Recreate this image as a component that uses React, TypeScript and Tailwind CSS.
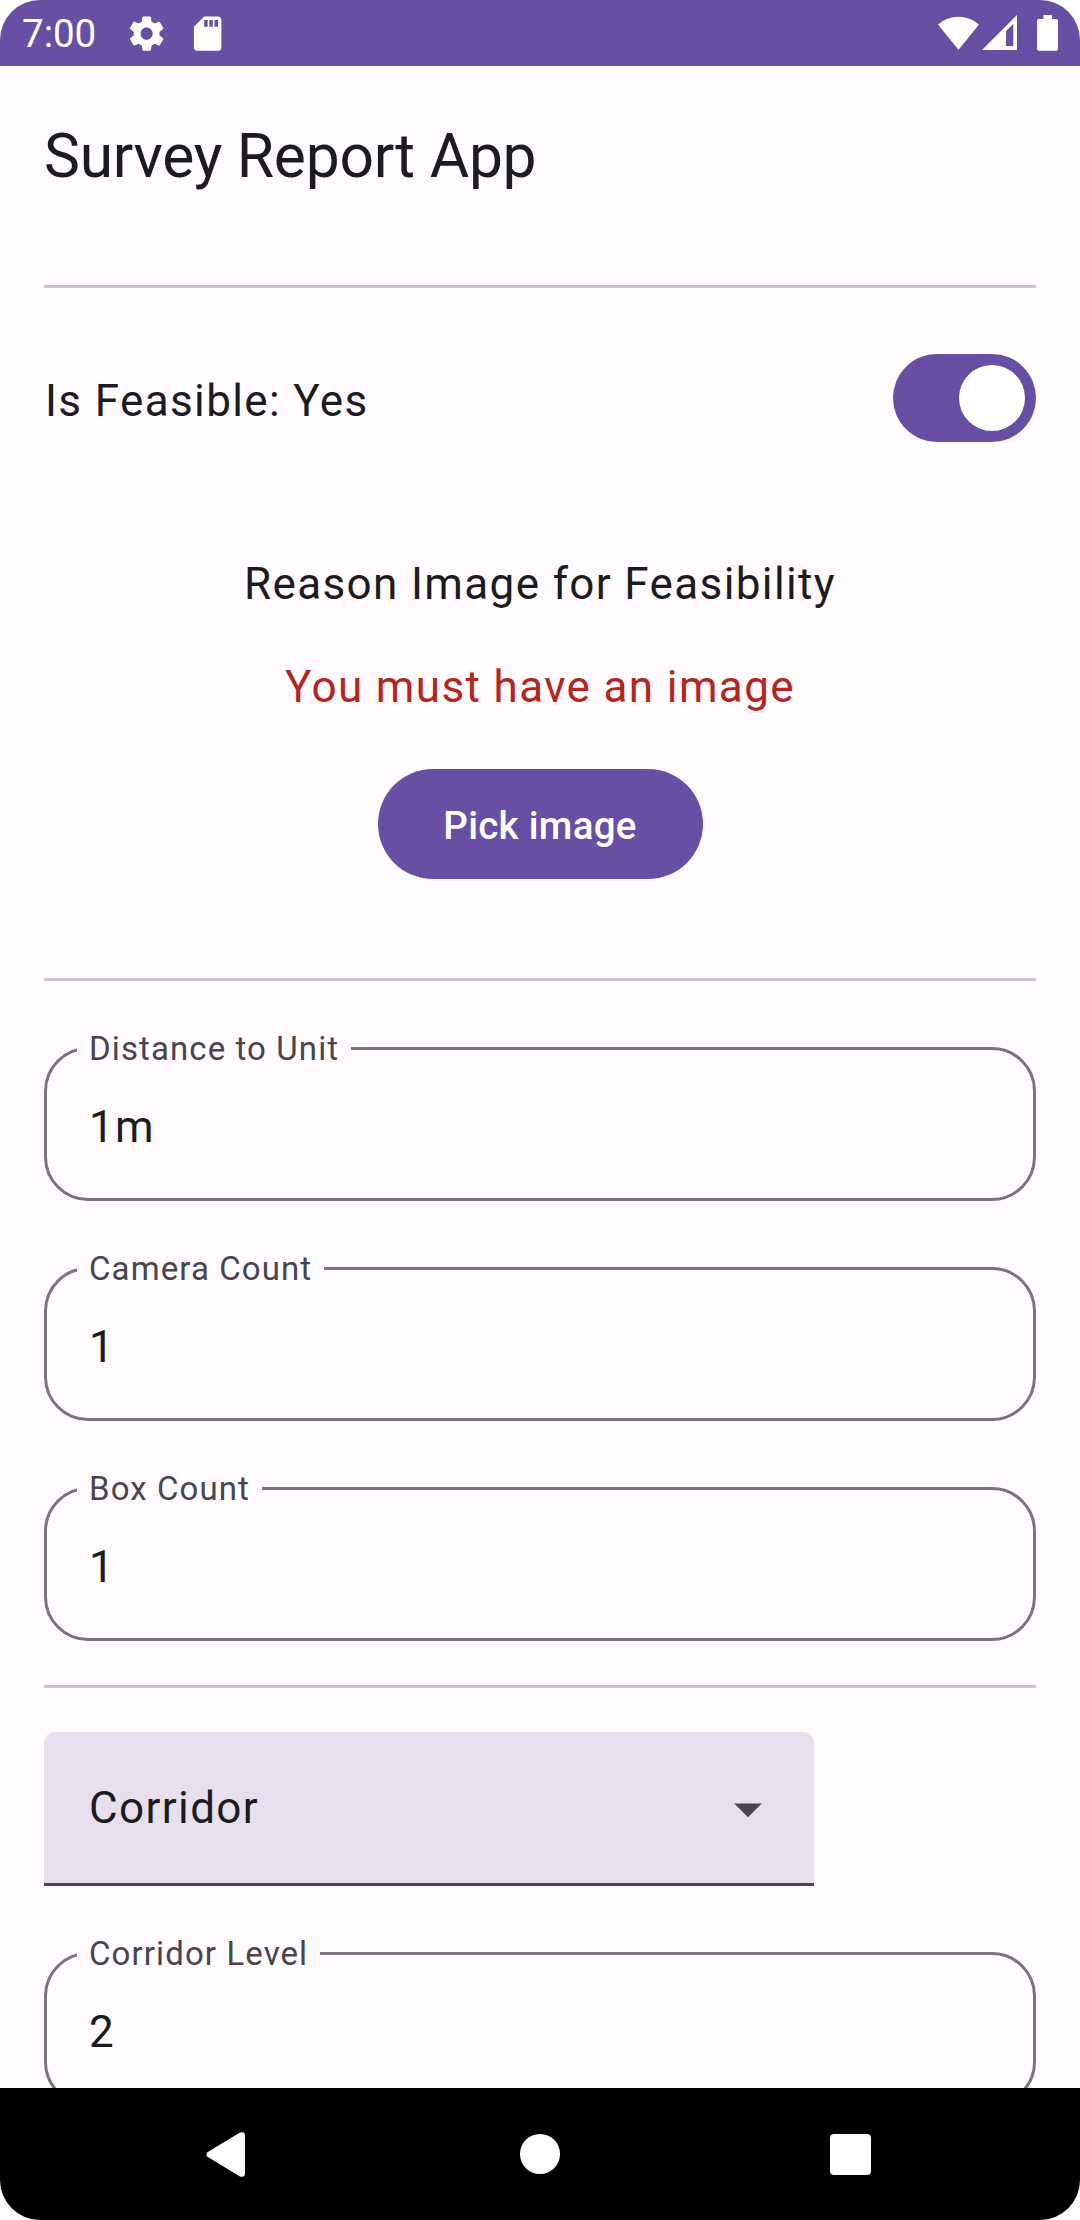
function StatusBar() {
  return (
    <header className="flex h-[66px] shrink-0 items-start justify-between bg-[#6750a4] text-white">
      <div className="flex items-start pl-[22px]">
        <span className="mt-[8px] w-[104px] text-[38.5px] leading-[52px]">7:00</span>
        <svg className="mt-[12.6px] size-[41.25px]" viewBox="0 0 24 24" fill="currentColor">
          <path d="M19.43 12.98c.04-.32.07-.64.07-.98s-.03-.66-.07-.98l2.11-1.65c.19-.15.24-.42.12-.64l-2-3.46c-.12-.22-.39-.3-.61-.22l-2.49 1c-.52-.4-1.08-.73-1.69-.98l-.38-2.65C14.46 2.18 14.25 2 14 2h-4c-.25 0-.46.18-.49.42l-.38 2.65c-.61.25-1.17.59-1.69.98l-2.49-1c-.23-.09-.49 0-.61.22l-2 3.46c-.13.22-.07.49.12.64l2.11 1.65c-.04.32-.07.65-.07.98s.03.66.07.98l-2.11 1.65c-.19.15-.24.42-.12.64l2 3.46c.12.22.39.3.61.22l2.49-1c.52.4 1.08.73 1.69.98l.38 2.65c.03.24.24.42.49.42h4c.25 0 .46-.18.49-.42l.38-2.65c.61-.25 1.17-.59 1.69-.98l2.49 1c.23.09.49 0 .61-.22l2-3.46c.12-.22.07-.49-.12-.64l-2.11-1.65zM12 15.5c-1.93 0-3.5-1.57-3.5-3.5s1.57-3.5 3.5-3.5 3.5 1.57 3.5 3.5-1.57 3.5-3.5 3.5z" />
        </svg>
        <svg className="mt-[12.6px] ml-[19.5px] size-[41.25px]" viewBox="0 0 24 24" fill="currentColor">
          <path d="M18 2h-8L4.02 8 4 20c0 1.1.9 2 2 2h12c1.1 0 2-.9 2-2V4c0-1.1-.9-2-2-2zm-6 6h-2V4h2v4zm3 0h-2V4h2v4zm3 0h-2V4h2v4z" />
        </svg>
      </div>
      <div className="mt-[15px] mr-[22px] flex items-start">
        <svg className="h-[36px] w-[41px]" viewBox="0 0 41 36" fill="currentColor">
          <path d="M0 9.5A31 31 0 0 1 41 9.5L20.5 34.7Z" />
        </svg>
        <svg className="ml-[3px] h-[36px] w-[35px]" viewBox="0 0 35 36" fill="currentColor">
          <path fillRule="evenodd" d="M0 35L35 0V35ZM24 16V31H31.3V9Z" />
        </svg>
        <svg className="ml-[20px] h-[36px] w-[21px]" viewBox="0 0 21 36" fill="currentColor">
          <path d="M6.3 0H15V4H19Q21 4 21 6V33.7Q21 35.7 19 35.7H2Q0 35.7 0 33.7V6Q0 4 2 4H6.3Z" />
        </svg>
      </div>
    </header>
  );
}

function Divider() {
  return <div className="h-[3px] w-full shrink-0 bg-[#cac4d0]" />;
}

function Field({ label, value }: { label: string; value: string }) {
  return (
    <div className="relative flex h-[154px] w-full shrink-0 items-center rounded-[44px] border-[3px] border-[#79747e] pt-[6px] pl-[42px]">
      <label className="absolute -top-[23px] left-[30px] bg-[#fffbfe] px-[12px] text-[33px] leading-[44px] tracking-[1.1px] whitespace-nowrap text-[#49454f]">
        {label}
      </label>
      <span className="leading-[66px]">{value}</span>
    </div>
  );
}

function NavBar() {
  return (
    <nav className="flex h-[132px] shrink-0 items-start bg-black pt-[44px] pl-[206px] text-white">
      <svg className="h-[45px] w-[40px]" viewBox="0 0 40 45" fill="currentColor">
        <path d="M1.4 20.2L34 .6Q39 -1.2 39 4V41Q39 46.2 34 44.4L1.4 24.8Q-.6 22.5 1.4 20.2Z" />
      </svg>
      <div className="mt-[1.5px] ml-[273.7px] size-[40.6px] rounded-full bg-white" />
      <div className="mt-[2px] ml-[269.7px] size-[41.4px] rounded-[4px] bg-white" />
    </nav>
  );
}

export default function App() {
  return (
    <div className="h-[2220px] w-[1080px] bg-white">
      <div className="flex h-full w-full flex-col overflow-hidden rounded-[40px] bg-[#fffbfe] font-['Roboto',sans-serif] text-[44px] tracking-normal text-[#1c1b1f]">
        <StatusBar />
        <main className="flex min-h-0 flex-1 flex-col overflow-hidden px-[44px] tracking-[1.375px]">
          <h1 className="mt-[52px] mb-[90px] text-[60.5px] leading-[77px] tracking-[-0.25px]">Survey Report App</h1>
          <Divider />
          <div className="mt-[66px] flex h-[88px] shrink-0 items-center justify-between">
            <span className="pt-[6px] pl-[1px] leading-[66px]">Is Feasible: Yes</span>
            <div className="flex h-[88px] w-[143px] items-center justify-end rounded-full bg-[#6750a4] pr-[11px]">
              <div className="size-[66px] rounded-full bg-white" />
            </div>
          </div>
          <div className="mt-[109px] mb-[99px] flex flex-col items-center">
            <p className="leading-[66px]">Reason Image for Feasibility</p>
            <p className="mt-[37px] leading-[66px] text-[#b3261e]">You must have an image</p>
            <button className="mt-[49px] flex h-[110px] w-[325px] items-center justify-center rounded-full bg-[#6750a4] pt-[3px] text-[38.5px] leading-[55px] font-medium tracking-[0.275px] text-white">
              Pick image
            </button>
          </div>
          <Divider />
          <div className="mt-[66px] mb-[44px] flex flex-col gap-[66px]">
            <Field label="Distance to Unit" value="1m" />
            <Field label="Camera Count" value="1" />
            <Field label="Box Count" value="1" />
          </div>
          <Divider />
          <div className="mt-[44px] flex h-[154px] w-[770px] shrink-0 items-center justify-between rounded-t-[11px] border-b-[3px] border-[#49454f] bg-[#e7e0ec] pr-[33px] pl-[45px]">
            <span className="pt-px leading-[66px]">Corridor</span>
            <svg className="mt-[3px] size-[66px] text-[#49454f]" viewBox="0 0 24 24" fill="currentColor">
              <path d="M7 10l5 5 5-5z" />
            </svg>
          </div>
          <div className="mt-[66px] flex flex-col">
            <Field label="Corridor Level" value="2" />
          </div>
        </main>
        <NavBar />
      </div>
    </div>
  );
}
